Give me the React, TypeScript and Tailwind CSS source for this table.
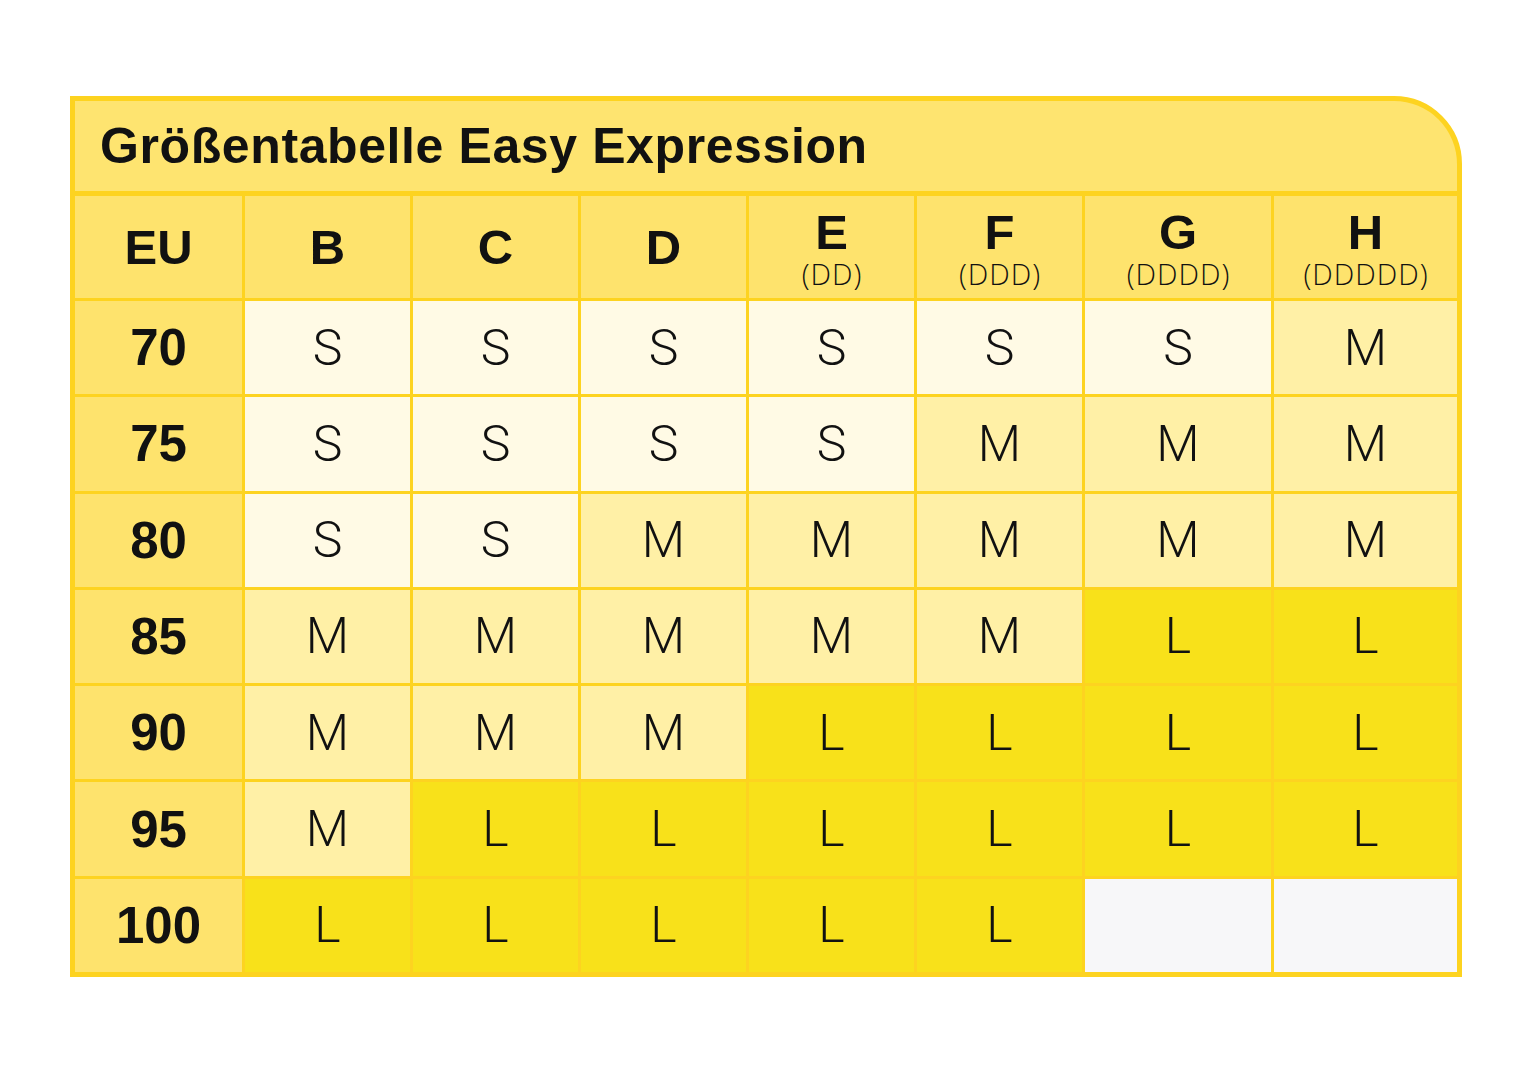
import type { FC } from 'react';

type Size = 'S' | 'M' | 'L' | '';

const columns: { label: string; sub?: string }[] = [
  { label: 'B' },
  { label: 'C' },
  { label: 'D' },
  { label: 'E', sub: '(DD)' },
  { label: 'F', sub: '(DDD)' },
  { label: 'G', sub: '(DDDD)' },
  { label: 'H', sub: '(DDDDD)' },
];

const rows: { eu: string; sizes: Size[] }[] = [
  { eu: '70', sizes: ['S', 'S', 'S', 'S', 'S', 'S', 'M'] },
  { eu: '75', sizes: ['S', 'S', 'S', 'S', 'M', 'M', 'M'] },
  { eu: '80', sizes: ['S', 'S', 'M', 'M', 'M', 'M', 'M'] },
  { eu: '85', sizes: ['M', 'M', 'M', 'M', 'M', 'L', 'L'] },
  { eu: '90', sizes: ['M', 'M', 'M', 'L', 'L', 'L', 'L'] },
  { eu: '95', sizes: ['M', 'L', 'L', 'L', 'L', 'L', 'L'] },
  { eu: '100', sizes: ['L', 'L', 'L', 'L', 'L', '', ''] },
];

const sizeBg: Record<Size, string> = {
  S: 'bg-[#fffae5]',
  M: 'bg-[#fff0a6]',
  L: 'bg-[#f8e11a]',
  '': 'bg-[#f7f7f9]',
};

const bold = "font-['Liberation_Sans',Arial,sans-serif] font-bold";
const light = "font-['Roboto',sans-serif] font-light";

const App: FC = () => {
  return (
    <div className="min-h-screen bg-white pl-[70px] pt-[96px] text-[#111111]">
      <div className="flex w-[1392px] flex-col gap-[5px] overflow-hidden rounded-tr-[68px] border-[5px] border-[#fdd320] bg-[#fdd320]">
        {/* Title */}
        <div className="flex h-[90px] items-center bg-[#fee470] pl-[25px]">
          <h1 className={`${bold} text-[50px] leading-none tracking-[0.6px]`}>Größentabelle Easy Expression</h1>
        </div>

        {/* Table */}
        <div className="grid h-[776px] grid-cols-[167px_repeat(5,165px)_186px_183px] grid-rows-[102px_repeat(7,1fr)] gap-[3px]">
          <div className="flex items-center justify-center bg-[#fee36d]">
            <span className={`${bold} text-[49px] leading-none`}>EU</span>
          </div>
          {columns.map((c) => (
            <div key={c.label} className="flex flex-col items-center justify-center bg-[#fee36d]">
              <span className={`${bold} text-[49px] leading-none ${c.sub ? 'mt-[2px]' : ''}`}>{c.label}</span>
              {c.sub && (
                <span className="mt-[2px] pl-[1px] font-['Open_Sans',sans-serif] text-[29px] font-light leading-none tracking-[1px]">
                  {c.sub}
                </span>
              )}
            </div>
          ))}

          {rows.map((r) => (
            <div key={r.eu} className="contents">
              <div className="flex items-center justify-center bg-[#fee36d]">
                <span className={`${bold} text-[51px] leading-none`}>{r.eu}</span>
              </div>
              {r.sizes.map((s, i) => (
                <div key={i} className={`flex items-center justify-center ${sizeBg[s]}`}>
                  <span className={`${light} text-[50px] leading-none`}>{s}</span>
                </div>
              ))}
            </div>
          ))}
        </div>
      </div>
    </div>
  );
};

export default App;
